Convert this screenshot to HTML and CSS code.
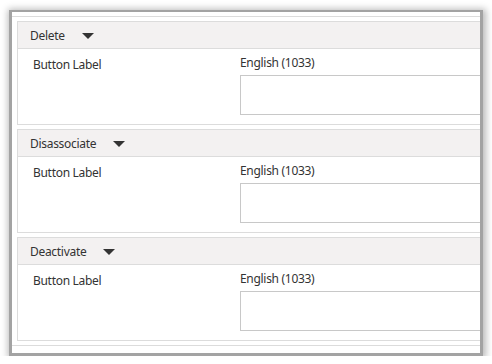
FILE: index.html
```html
<!DOCTYPE html>
<html lang="en">

<head>
    <meta charset="utf-8">
    <title>Button Labels</title>
    <link rel="stylesheet" href="styles.css">
</head>

<body>

    <div class="window">
        <div class="list">

            <div class="section">
                <div class="section-head">
                    <span>Delete</span>
                    <svg class="caret" width="12" height="6" viewBox="0 0 12 6"><polygon points="0,0 12,0 6,6" /></svg>
                </div>
                <div class="section-body">
                    <div class="label">Button Label</div>
                    <div class="field">
                        <div class="lang">English (1033)</div>
                        <textarea class="input"></textarea>
                    </div>
                </div>
            </div>

            <div class="section">
                <div class="section-head">
                    <span>Disassociate</span>
                    <svg class="caret" width="12" height="6" viewBox="0 0 12 6"><polygon points="0,0 12,0 6,6" /></svg>
                </div>
                <div class="section-body">
                    <div class="label">Button Label</div>
                    <div class="field">
                        <div class="lang">English (1033)</div>
                        <textarea class="input"></textarea>
                    </div>
                </div>
            </div>

            <div class="section">
                <div class="section-head">
                    <span>Deactivate</span>
                    <svg class="caret" width="12" height="6" viewBox="0 0 12 6"><polygon points="0,0 12,0 6,6" /></svg>
                </div>
                <div class="section-body">
                    <div class="label">Button Label</div>
                    <div class="field">
                        <div class="lang">English (1033)</div>
                        <textarea class="input"></textarea>
                    </div>
                </div>
            </div>

        </div>
    </div>

</body>

</html>
```

FILE: styles.css
```css
body {
    margin: 0;
    background-color: #fff;
    font-family: "Segoe UI", "Noto Sans", sans-serif;
    font-size: 12px;
    letter-spacing: -0.3px;
    color: #333;
}

.window {
    margin: 10px 0 0 9px;
    width: 468px;
    height: 341px;
    background-color: #fff;
    border: 3px solid #a3a3a3;
    border-top-width: 2px;
    box-shadow: 1px 1px 7px 2px rgba(0, 0, 0, 0.28);
    overflow: hidden;
}

.list {
    margin-top: 4px;
    padding: 4px 0 4px 5px;
    width: 540px;
    border-top: 1px solid #dcdcdc;
    border-bottom: 1px solid #dcdcdc;
    display: flex;
    flex-direction: column;
    gap: 4px;
}

.section {
    border: 1px solid #dcdcdc;
}

.section-head {
    height: 27px;
    box-sizing: border-box;
    padding: 1px 0 0 12px;
    line-height: 25px;
    background-color: #f3f1f1;
    border-bottom: 1px solid #dcdcdc;
    display: flex;
    align-items: center;
}

.caret {
    margin-left: 17px;
    fill: #333;
}

.section-body {
    height: 75px;
    box-sizing: border-box;
    padding: 6px 0 0 15px;
    display: grid;
    grid-template-columns: 207px 1fr;
    line-height: 16px;
}

.label {
    padding-top: 2px;
}

.input {
    display: block;
    margin-top: 4px;
    width: 100%;
    height: 40px;
    box-sizing: border-box;
    border: 1px solid #c8c8c8;
    resize: none;
}
```
